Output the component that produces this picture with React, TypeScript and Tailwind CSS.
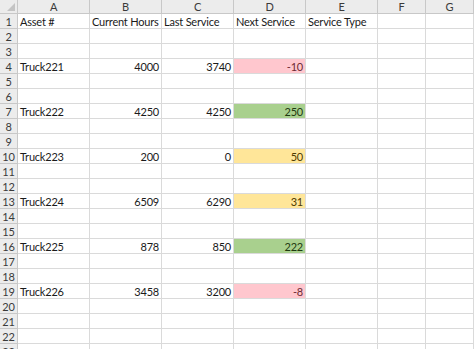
import React from "react";

const cols = ["A", "B", "C", "D", "E", "F", "G"];

type Cell = { v?: string; right?: boolean; fill?: string; color?: string };

const rowsData: Record<number, Cell[]> = {
  1: [{ v: "Asset #" }, { v: "Current Hours" }, { v: "Last Service" }, { v: "Next Service" }, { v: "Service Type" }],
  4: [{ v: "Truck221" }, { v: "4000", right: true }, { v: "3740", right: true }, { v: "-10", right: true, fill: "bg-[#ffc7ce]", color: "text-[#6e2a32]" }],
  7: [{ v: "Truck222" }, { v: "4250", right: true }, { v: "4250", right: true }, { v: "250", right: true, fill: "bg-[#a9d08e]", color: "text-[#1f3a10]" }],
  10: [{ v: "Truck223" }, { v: "200", right: true }, { v: "0", right: true }, { v: "50", right: true, fill: "bg-[#ffe699]", color: "text-[#4f3b00]" }],
  13: [{ v: "Truck224" }, { v: "6509", right: true }, { v: "6290", right: true }, { v: "31", right: true, fill: "bg-[#ffe699]", color: "text-[#4f3b00]" }],
  16: [{ v: "Truck225" }, { v: "878", right: true }, { v: "850", right: true }, { v: "222", right: true, fill: "bg-[#a9d08e]", color: "text-[#1f3a10]" }],
  19: [{ v: "Truck226" }, { v: "3458", right: true }, { v: "3200", right: true }, { v: "-8", right: true, fill: "bg-[#ffc7ce]", color: "text-[#6e2a32]" }],
};

export default function App() {
  const rows = Array.from({ length: 23 }, (_, i) => i + 1);
  return (
    <div
      className="w-[474px] h-[349px] overflow-hidden bg-white text-[11px] tracking-[-0.2px] text-[#1a1a1a]"
      style={{ fontFamily: 'Lato, "Noto Sans", sans-serif' }}
    >
      <div className="grid grid-cols-[18px_72px_72px_72px_72px_72px_48px_48px] auto-rows-[15px] grid-rows-[14px]">
        <div className="relative bg-[#ececec] border-r border-b border-[#c8c8c8]">
          <div className="absolute right-[2px] bottom-[2px] w-0 h-0 border-l-[8px] border-l-transparent border-b-[8px] border-b-[#c4c4c4]" />
        </div>
        {cols.map((c) => (
          <div
            key={c}
            className="bg-[#ececec] border-r border-b border-[#c8c8c8] flex items-center justify-center text-[#3a3a3a] leading-none"
          >
            {c}
          </div>
        ))}
        {rows.map((r) => {
          const data = rowsData[r] || [];
          return (
            <React.Fragment key={r}>
              <div className="bg-[#ececec] border-r border-b border-[#c8c8c8] flex items-center justify-center text-[#3a3a3a] leading-none">
                {r}
              </div>
              {cols.map((c, ci) => {
                const cell = data[ci] || {};
                return (
                  <div
                    key={c}
                    className={`border-r border-b border-[#dadada] flex items-center px-[2px] leading-none whitespace-nowrap ${
                      cell.right ? "justify-end" : "justify-start"
                    } ${cell.fill ?? ""} ${cell.color ?? ""}`}
                  >
                    {cell.v}
                  </div>
                );
              })}
            </React.Fragment>
          );
        })}
      </div>
    </div>
  );
}
